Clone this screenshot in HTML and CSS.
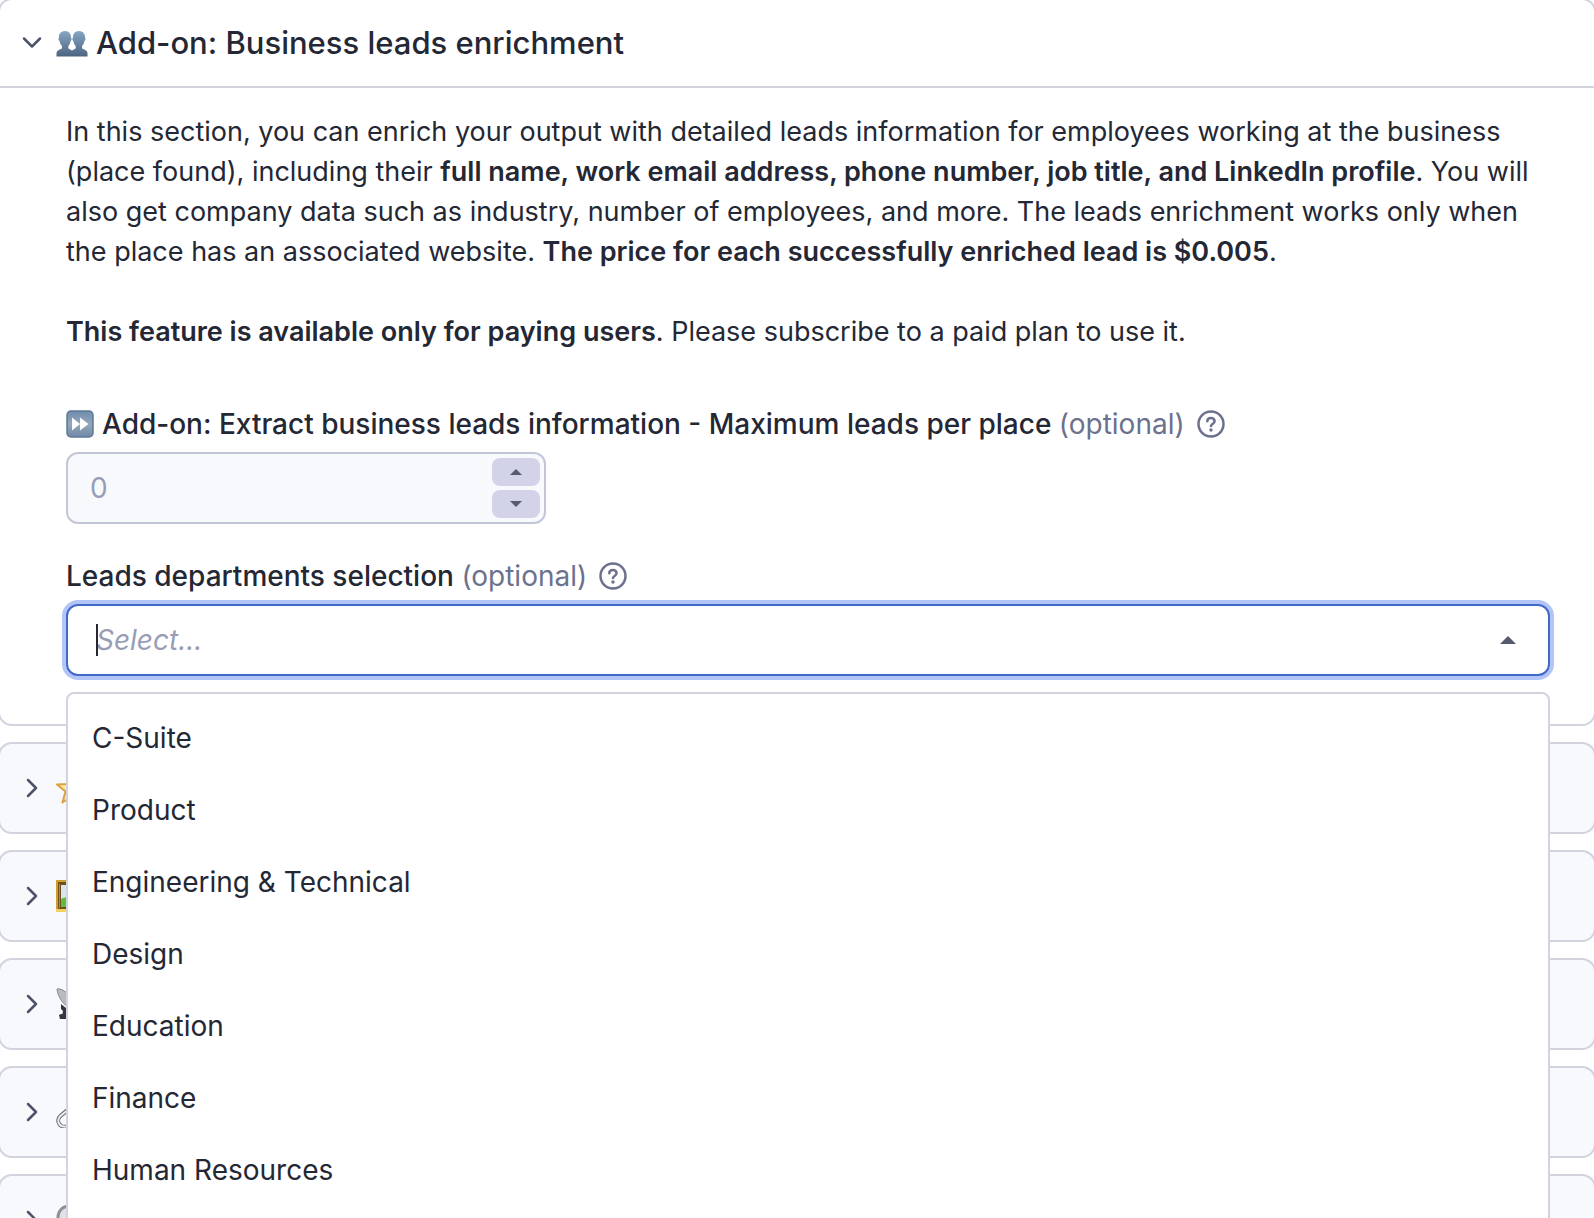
FILE: index.html
```html
<!DOCTYPE html>
<html lang="en">
<head>
<meta charset="utf-8">
<meta name="viewport" content="width=device-width, initial-scale=1">
<title>Add-on: Business leads enrichment</title>
<link rel="stylesheet" href="styles.css">
</head>
<body>
<main class="sections">
  <section class="card card-open">
    <button class="card-header" type="button" aria-expanded="true">
      <svg class="chevron" viewBox="0 0 24 24" aria-hidden="true"><path d="M4 7.500l8 8 8-8"/></svg>
      <svg class="emoji" viewBox="0 -1 32 32" aria-hidden="true">
        <defs><linearGradient id="bust" x1="0" y1="0" x2="0" y2="1"><stop offset="0" stop-color="#86a6c3"/><stop offset="1" stop-color="#4c6482"/></linearGradient></defs>
        <path fill="url(#bust)" d="M9 3C4.800 3 2.800 6 3 9.500C2 10 2.400 12.500 3.500 13C4 15.500 5 17 6 18V20C5.500 21.600 1 21.500 .5 25V28.500H31.500V25C31 21.500 26.500 21.600 26 20V18C27 17 28 15.500 28.500 13C29.600 12.500 30 10 29 9.500C29.200 6 27.200 3 23 3C18.800 3 17 6 17 9.500C16 10 16.200 12.500 17.300 13C17.800 15.500 18.700 17 19.700 18V20C19.400 21 17.500 21.500 16 22.500C14.500 21.500 12.600 21 12.300 20V18C13.300 17 14.200 15.500 14.700 13C15.800 12.500 16 10 15 9.500C15 6 13.200 3 9 3Z"/>
      </svg>
      <span class="card-title">Add-on: Business leads enrichment</span>
    </button>
    <div class="card-body">
      <p class="description">In this section, you can enrich your output with detailed leads information for employees working at the business (place found), including their <strong>full name, work email address, phone number, job title, and LinkedIn profile</strong>. You will also get company data such as industry, number of employees, and more. The leads enrichment works only when the place has an associated website. <strong>The price for each successfully enriched lead is $0.005</strong>.</p>
      <p class="description"><strong>This feature is available only for paying users</strong>. Please subscribe to a paid plan to use it.</p>

      <div class="field field-first">
        <div class="field-label">
          <svg class="label-icon" viewBox="0 0 28 28" aria-hidden="true">
            <defs><linearGradient id="key" x1="0" y1="0" x2="0" y2="1"><stop offset="0" stop-color="#6f8cac"/><stop offset=".5" stop-color="#92a7bd"/><stop offset="1" stop-color="#7089a5"/></linearGradient></defs>
            <rect x="1" y="1" width="26" height="26" rx="4" fill="url(#key)" stroke="#5f7997" stroke-width="1.500"/>
            <path fill="#fff" d="M6 7.500l8 6.500-8 6.500zM14 7.500l8.500 6.500-8.500 6.500z"/>
          </svg>
          <label for="max-leads">Add-on: Extract business leads information - Maximum leads per place <span class="optional">(optional)</span></label>
          <button class="help" type="button" aria-label="Help">
            <svg viewBox="0 0 28 28"><circle cx="14" cy="14" r="12.500"/><path d="M10.300 11.300C10.300 6.800 17.600 6.800 17.600 11.300C17.600 14 14 14 14 16"/><circle class="dot" cx="14" cy="20" r="1.700"/></svg>
          </button>
        </div>
        <div class="stepper">
          <input id="max-leads" type="text" inputmode="numeric" value="0">
          <div class="stepper-buttons">
            <button type="button" aria-label="Increase"><svg viewBox="0 0 12 6"><path d="M6 0l6 6H0z"/></svg></button>
            <button type="button" aria-label="Decrease"><svg viewBox="0 0 12 6"><path d="M0 0h12L6 6z"/></svg></button>
          </div>
        </div>
      </div>

      <div class="field">
        <div class="field-label">
          <label for="departments">Leads departments selection <span class="optional">(optional)</span></label>
          <button class="help" type="button" aria-label="Help">
            <svg viewBox="0 0 28 28"><circle cx="14" cy="14" r="12.500"/><path d="M10.300 11.300C10.300 6.800 17.600 6.800 17.600 11.300C17.600 14 14 14 14 16"/><circle class="dot" cx="14" cy="20" r="1.700"/></svg>
          </button>
        </div>
        <div class="combo">
          <div class="combo-control">
            <span class="caret"></span>
            <input id="departments" type="text" role="combobox" aria-expanded="true" aria-controls="department-list" placeholder="Select...">
            <svg class="combo-arrow" viewBox="0 0 16 8" aria-hidden="true"><path d="M8 0l8 8H0z"/></svg>
          </div>
          <ul class="menu" id="department-list" role="listbox">
            <li role="option">C-Suite</li>
            <li role="option">Product</li>
            <li role="option">Engineering &amp; Technical</li>
            <li role="option">Design</li>
            <li role="option">Education</li>
            <li role="option">Finance</li>
            <li role="option">Human Resources</li>
          </ul>
        </div>
      </div>
    </div>
  </section>

  <section class="card">
    <button class="card-header" type="button" aria-expanded="false" aria-label="Expand section">
      <svg class="chevron" viewBox="0 0 24 24" aria-hidden="true"><path d="M8 4l8 8-8 8"/></svg>
      <svg class="emoji" viewBox="0 0 32 32" aria-hidden="true"><path fill="#fbe7b0" stroke="#dda03c" stroke-width="2" stroke-linejoin="round" d="M16 2l4 10 11 .5-8.500 7 3 11L16 24.500 6.500 30.500l3-11L1 12.500 12 12z"/></svg>
    </button>
  </section>
  <section class="card">
    <button class="card-header" type="button" aria-expanded="false" aria-label="Expand section">
      <svg class="chevron" viewBox="0 0 24 24" aria-hidden="true"><path d="M8 4l8 8-8 8"/></svg>
      <svg class="emoji" viewBox="0 0 32 32" aria-hidden="true"><path fill="#cf9f2d" d="M0 0h32v32H0z"/><path fill="#70501c" d="M2 2h28v27H2z"/><path fill="#b98a2a" d="M3 4h1v24H3z"/><path fill="#f2d15c" d="M0 29h32v3H0z"/><path fill="#d5e6ef" d="M5 5h22v22H5z"/><path fill="#61bd3b" d="M5 19c5-3 10-1 22-2v10H5z"/></svg>
    </button>
  </section>
  <section class="card">
    <button class="card-header" type="button" aria-expanded="false" aria-label="Expand section">
      <svg class="chevron" viewBox="0 0 24 24" aria-hidden="true"><path d="M8 4l8 8-8 8"/></svg>
      <svg class="emoji" viewBox="0 0 32 32" aria-hidden="true"><path fill="#b8babd" stroke="#85888d" d="M1 1C7-1 20 12 24 22C14 24 2 13 1 1z"/><path fill="#34373f" d="M5 16l5 4 1 8H6l1-5-2-2zM3 27c3-2 10-2 13 0v4H4z"/></svg>
    </button>
  </section>
  <section class="card">
    <button class="card-header" type="button" aria-expanded="false" aria-label="Expand section">
      <svg class="chevron" viewBox="0 0 24 24" aria-hidden="true"><path d="M8 4l8 8-8 8"/></svg>
      <svg class="emoji" viewBox="0 0 32 32" aria-hidden="true"><g fill="none" transform="rotate(-40 9 24)"><rect x="2" y="18" width="20" height="12" rx="6" stroke="#66696e" stroke-width="4"/><rect x="2" y="18" width="20" height="12" rx="6" stroke="#eceeef" stroke-width="2"/></g></svg>
    </button>
  </section>
  <section class="card">
    <button class="card-header" type="button" aria-expanded="false" aria-label="Expand section">
      <svg class="chevron" viewBox="0 0 24 24" aria-hidden="true"><path d="M8 4l8 8-8 8"/></svg>
      <svg class="emoji" viewBox="0 0 32 32" aria-hidden="true"><circle cx="13" cy="13" r="11" fill="#dfe3e8" stroke="#8e9196" stroke-width="3"/><path stroke="#4b4e55" stroke-width="4" d="M21 21l9 9"/></svg>
    </button>
  </section>
</main>
</body>
</html>
```
FILE: styles.css
```css
*,
*::before,
*::after {
  box-sizing: border-box;
}

body {
  margin: 0;
  background: #fff;
  color: #242734;
  font-family: Inter, "Liberation Sans", sans-serif;
  font-size: 28px;
  line-height: 40px;
}

button,
input {
  font: inherit;
  color: inherit;
}

button {
  border: 0;
  padding: 0;
  background: none;
  cursor: pointer;
}

strong {
  font-weight: 600;
}

.sections {
  display: flex;
  flex-direction: column;
  gap: 16px;
  height: 100vh;
  overflow: hidden;
}

.card {
  flex: none;
  margin: 0 -2px;
  border: 2px solid #d2d3de;
  border-radius: 14px;
  background: #f8f9fd;
}

.card-open {
  margin-top: -2px;
  background: #fff;
}

.card-header {
  display: flex;
  align-items: center;
  width: 100%;
  height: 88px;
  padding: 0 20px;
  text-align: left;
}

.card-open .card-header {
  border-bottom: 2px solid #d2d3de;
}

.chevron {
  width: 24px;
  height: 24px;
  margin-right: 12px;
  fill: none;
  stroke: #4e5468;
  stroke-width: 2.500;
  stroke-linecap: round;
  stroke-linejoin: round;
}

.emoji {
  width: 32px;
  height: 32px;
  margin-right: 8px;
}

.card-title {
  font-size: 31px;
  font-weight: 500;
}

.card-body {
  padding: 24px 44px 48px 66px;
}

.description {
  margin: 0 0 40px;
  font-size: 27px;
}

.field {
  margin-top: 32px;
}

.field-first {
  margin-top: 52px;
}

.field-label {
  display: flex;
  align-items: center;
  margin-bottom: 8px;
  font-weight: 500;
}

.label-icon {
  width: 28px;
  height: 28px;
  margin-right: 8px;
}

.optional {
  color: #6c718d;
  font-weight: 400;
}

.help {
  display: flex;
  margin-left: 12px;
}

.help svg {
  width: 28px;
  height: 28px;
  fill: none;
  stroke: #6c718d;
  stroke-width: 2.500;
  stroke-linecap: round;
}

.help .dot {
  fill: #6c718d;
  stroke: none;
}

.stepper {
  display: flex;
  width: 480px;
  max-width: 100%;
  height: 72px;
  padding: 4px;
  border: 2px solid #c3c6d8;
  border-radius: 12px;
  background: #f8f9fd;
}

.stepper input {
  flex: 1;
  min-width: 0;
  padding: 0 18px;
  border: 0;
  outline: 0;
  background: none;
  color: #989db6;
}

.stepper-buttons {
  display: flex;
  flex-direction: column;
  gap: 4px;
  width: 48px;
}

.stepper-buttons button {
  display: flex;
  flex: 1;
  align-items: center;
  justify-content: center;
  border-radius: 8px;
  background: #d2d3e8;
}

.stepper-buttons svg {
  width: 12px;
  height: 6px;
  fill: #555a6e;
}

.combo {
  position: relative;
}

.combo-control {
  position: relative;
  display: flex;
  align-items: center;
  height: 72px;
  padding: 0 32px 0 28px;
  border: 2px solid #4169c9;
  border-radius: 12px;
  background: #fff;
  box-shadow: 0 0 0 4px #b3c5f7;
}

.combo-control input {
  flex: 1;
  min-width: 0;
  padding: 0;
  border: 0;
  outline: 0;
  background: none;
}

.combo-control input::placeholder {
  color: #989db6;
  font-style: italic;
  opacity: 1;
}

.caret {
  position: absolute;
  left: 28px;
  width: 2px;
  height: 32px;
  background: #242734;
}

.combo-arrow {
  width: 16px;
  height: 8px;
  fill: #555a6e;
}

.menu {
  position: absolute;
  z-index: 1;
  top: 100%;
  left: 0;
  right: 0;
  margin: 16px 0 0;
  padding: 8px 0 24px;
  border: 2px solid #d2d3de;
  border-radius: 8px;
  background: #fff;
  list-style: none;
}

.menu li {
  padding: 16px 24px;
}
```
